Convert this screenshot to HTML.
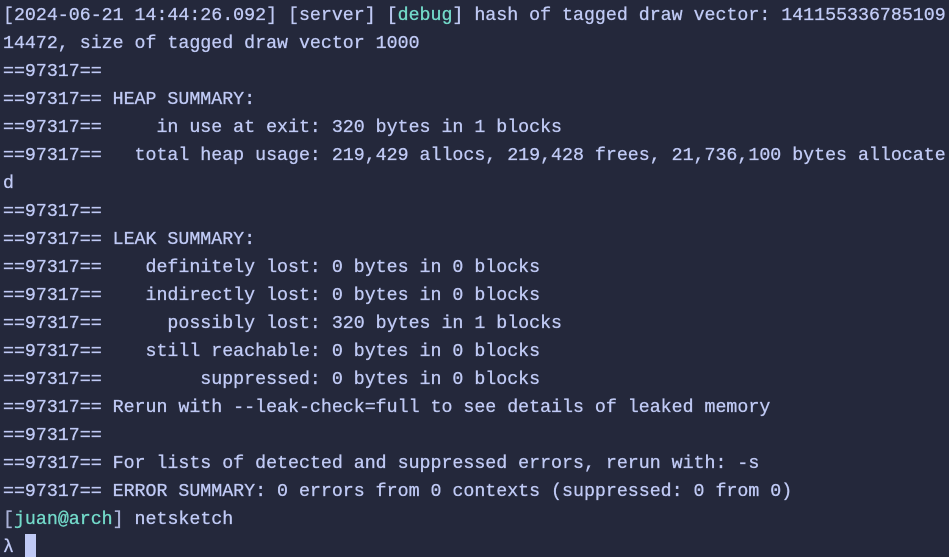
<!DOCTYPE html>
<html><head><meta charset="utf-8"><style>
html,body{margin:0;padding:0;background:#24283b;width:949px;height:557px;overflow:hidden}
pre{margin:0;padding:2px 0 0 3px;font-family:"Liberation Mono","DejaVu Sans Mono",monospace;font-size:18.27px;line-height:28px;color:#c0caf5;white-space:pre;-webkit-text-stroke:0.3px #c0caf5}
.g{color:#73daca;-webkit-text-stroke-color:#73daca}.b{color:#a9b1d6}
.cur{display:inline-block;width:11px;height:25px;background:#c0caf5;vertical-align:-7px}
</style></head><body><pre>[2024-06-21 14:44:26.092] [server] [<span class="g">debug</span>] hash of tagged draw vector: 141155336785109
14472, size of tagged draw vector 1000
==97317==
==97317== HEAP SUMMARY:
==97317==     in use at exit: 320 bytes in 1 blocks
==97317==   total heap usage: 219,429 allocs, 219,428 frees, 21,736,100 bytes allocate
d
==97317==
==97317== LEAK SUMMARY:
==97317==    definitely lost: 0 bytes in 0 blocks
==97317==    indirectly lost: 0 bytes in 0 blocks
==97317==      possibly lost: 320 bytes in 1 blocks
==97317==    still reachable: 0 bytes in 0 blocks
==97317==         suppressed: 0 bytes in 0 blocks
==97317== Rerun with --leak-check=full to see details of leaked memory
==97317==
==97317== For lists of detected and suppressed errors, rerun with: -s
==97317== ERROR SUMMARY: 0 errors from 0 contexts (suppressed: 0 from 0)
<span class="b">[</span><span class="g">juan@arch</span><span class="b">]</span> netsketch
λ <span class="cur"></span></pre></body></html>
